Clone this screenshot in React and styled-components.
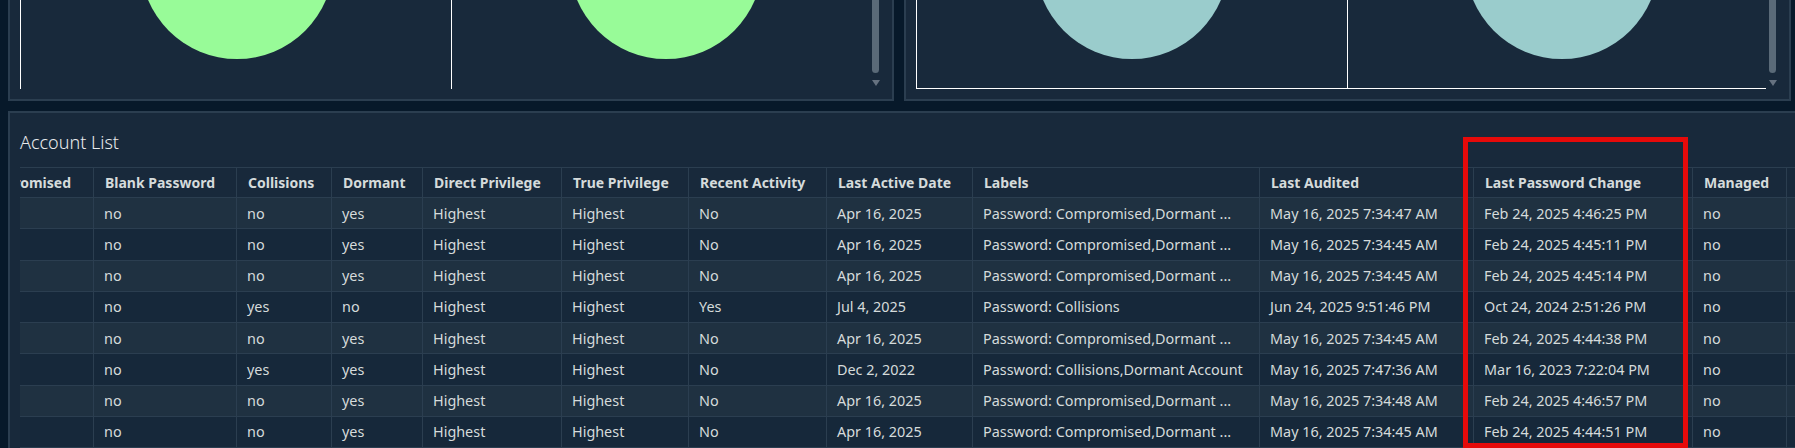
import React from "react";
import styled, { createGlobalStyle } from "styled-components";

const Global = createGlobalStyle`
  html, body { margin: 0; padding: 0; background: #07192a; }
  body { font-family: "Noto Sans", "Liberation Sans", sans-serif; }
`;

const Page = styled.div`
  position: relative;
  width: 1795px;
  height: 448px;
  overflow: hidden;
  box-sizing: border-box;
  padding: 0 4px 0 8px;
  background: #07192a;
`;

const ChartRow = styled.div`
  display: grid;
  grid-template-columns: 886px 887px;
  column-gap: 10px;
  height: 101px;
`;

const ChartPanel = styled.section`
  display: flex;
  box-sizing: border-box;
  height: 101px;
  background: #18293b;
  border: 2px solid #2b3e50;
  border-top: none;
`;

const ChartSvg = styled.svg`
  display: block;
  flex: none;
  width: ${(p) => p.$w}px;
  height: 99px;
`;

const ScrollRail = styled.div`
  display: flex;
  flex-direction: column;
  align-items: center;
  width: 9px;
  height: 86px;
  margin-left: ${(p) => p.$offset}px;
`;

const ScrollThumb = styled.div`
  width: 7px;
  height: 73px;
  flex: none;
  background: #5a6a78;
  border-radius: 0 0 4px 4px;
`;

const ScrollArrow = styled.div`
  width: 0;
  height: 0;
  margin-top: 7px;
  border-left: 4.5px solid transparent;
  border-right: 4.5px solid transparent;
  border-top: 6px solid #667280;
`;

const ListPanel = styled.section`
  box-sizing: border-box;
  margin: 10px -12px 0 0;
  height: 340px;
  padding: 0 0 0 10px;
  background: #18293b;
  border: 2px solid #2b3e50;
  overflow: hidden;
`;

const ListTitle = styled.h2`
  margin: 0;
  height: 54px;
  box-sizing: border-box;
  padding-top: 17px;
  font-size: 18px;
  line-height: 25px;
  font-weight: 300;
  color: #e9ebed;
`;

const TableClip = styled.div`
  overflow: hidden;
  border-top: 1px solid #2b3e50;
`;

const Table = styled.table`
  table-layout: fixed;
  width: 1899px;
  margin-left: -57px;
  border-collapse: separate;
  border-spacing: 0;
  font-size: 14.4px;
  color: #d5dbdb;
`;

const HeadCell = styled.th`
  box-sizing: border-box;
  height: 30px;
  padding: 0 11px;
  text-align: left;
  font-size: 14px;
  font-weight: 700;
  white-space: nowrap;
  color: #d5dbdb;
  border-right: 1px solid #2b3e50;
  border-bottom: 1px solid #2b3e50;
`;

const Row = styled.tr`
  height: 31.25px;
  background: ${(p) => (p.$alt ? "#1f3141" : "#16283a")};
`;

const Cell = styled.td`
  box-sizing: border-box;
  padding: 0 10px;
  white-space: nowrap;
  overflow: hidden;
  border-right: 1px solid #2b3e50;
  border-bottom: 1px solid #2b3e50;
`;

const Highlight = styled.div`
  position: absolute;
  left: 1463px;
  top: 137px;
  width: 225px;
  height: 311px;
  box-sizing: border-box;
  border: 5px solid #e60a0a;
  pointer-events: none;
`;

const widths = [131, 143, 95, 91, 139, 127, 138, 146, 287, 214, 219, 94, 75];
const heads = [
  "Compromised", "Blank Password", "Collisions", "Dormant", "Direct Privilege",
  "True Privilege", "Recent Activity", "Last Active Date", "Labels", "Last Audited",
  "Last Password Change", "Managed", "",
];

const PC = "Password: Compromised,Dormant ...";
const rows = [
  ["no", "no", "yes", "No", "Apr 16, 2025", PC, "May 16, 2025 7:34:47 AM", "Feb 24, 2025 4:46:25 PM"],
  ["no", "no", "yes", "No", "Apr 16, 2025", PC, "May 16, 2025 7:34:45 AM", "Feb 24, 2025 4:45:11 PM"],
  ["no", "no", "yes", "No", "Apr 16, 2025", PC, "May 16, 2025 7:34:45 AM", "Feb 24, 2025 4:45:14 PM"],
  ["no", "yes", "no", "Yes", "Jul 4, 2025", "Password: Collisions", "Jun 24, 2025 9:51:46 PM", "Oct 24, 2024 2:51:26 PM"],
  ["no", "no", "yes", "No", "Apr 16, 2025", PC, "May 16, 2025 7:34:45 AM", "Feb 24, 2025 4:44:38 PM"],
  ["no", "yes", "yes", "No", "Dec 2, 2022", "Password: Collisions,Dormant Account", "May 16, 2025 7:47:36 AM", "Mar 16, 2023 7:22:04 PM"],
  ["no", "no", "yes", "No", "Apr 16, 2025", PC, "May 16, 2025 7:34:48 AM", "Feb 24, 2025 4:46:57 PM"],
  ["no", "no", "yes", "No", "Apr 16, 2025", PC, "May 16, 2025 7:34:45 AM", "Feb 24, 2025 4:44:51 PM"],
];

function Chart({ width, fill, lines, circles, baseline, offset }) {
  return (
    <ChartPanel>
      <ChartSvg $w={width} viewBox={`0 0 ${width} 99`}>
        {circles.map((cx) => (
          <circle key={cx} cx={cx} cy={-37.5} r={96.5} fill={fill} />
        ))}
        {lines.map((x) => (
          <line key={x} x1={x + 0.5} x2={x + 0.5} y1={0} y2={89} stroke="#fff" strokeWidth={1} />
        ))}
        {baseline && <line x1={10} x2={860} y1={88.5} y2={88.5} stroke="#fff" strokeWidth={1} />}
      </ChartSvg>
      <ScrollRail $offset={offset}>
        <ScrollThumb />
        <ScrollArrow />
      </ScrollRail>
    </ChartPanel>
  );
}

export default function App() {
  return (
    <Page>
      <Global />
      <ChartRow>
        <Chart width={858} fill="#98fb98" lines={[10, 441]} circles={[227, 656]} offset={3} />
        <Chart width={860} fill="#9acccc" lines={[10, 441]} circles={[226, 656]} baseline offset={2} />
      </ChartRow>
      <ListPanel>
        <ListTitle>Account List</ListTitle>
        <TableClip>
          <Table>
            <colgroup>
              {widths.map((w, i) => (
                <col key={i} width={w} />
              ))}
            </colgroup>
            <thead>
              <tr>
                {heads.map((h, i) => (
                  <HeadCell key={i}>{h}</HeadCell>
                ))}
              </tr>
            </thead>
            <tbody>
              {rows.map((r, i) => (
                <Row key={i} $alt={i % 2 === 0}>
                  <Cell />
                  <Cell>{r[0]}</Cell>
                  <Cell>{r[1]}</Cell>
                  <Cell>{r[2]}</Cell>
                  <Cell>Highest</Cell>
                  <Cell>Highest</Cell>
                  <Cell>{r[3]}</Cell>
                  <Cell>{r[4]}</Cell>
                  <Cell>{r[5]}</Cell>
                  <Cell>{r[6]}</Cell>
                  <Cell>{r[7]}</Cell>
                  <Cell>no</Cell>
                  <Cell />
                </Row>
              ))}
            </tbody>
          </Table>
        </TableClip>
      </ListPanel>
      <Highlight />
    </Page>
  );
}
